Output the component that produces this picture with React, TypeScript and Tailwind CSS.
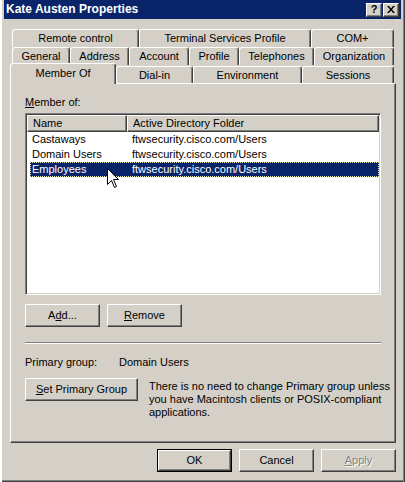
import React from 'react';

const face = { fontFamily: '"Liberation Sans", Arial, sans-serif' };

function Tab({ label, w, h = 'h-[18px]' }: { label: string; w: string; h?: string }) {
  return (
    <div
      className={`${w} ${h} shrink-0 flex items-center justify-center bg-[#d4d0c8] border-l border-t border-r border-white border-r-[#404040] rounded-tl-[3px] rounded-tr-[3px] shadow-[inset_-1px_0_0_#808080]`}
    >
      {label}
    </div>
  );
}

function Btn({ children, w, def, disabled }: { children: React.ReactNode; w: string; def?: boolean; disabled?: boolean }) {
  const inner = (
    <div
      className={`h-full w-full flex items-center justify-center border-t border-l border-white border-r border-b border-r-[#404040] border-b-[#404040] shadow-[inset_-1px_-1px_0_#808080] ${
        disabled ? 'text-[#808080] [text-shadow:1px_1px_0_#fff]' : ''
      }`}
    >
      {children}
    </div>
  );
  if (def) {
    return <div className={`${w} h-[23px] shrink-0 border border-black`}>{inner}</div>;
  }
  return <div className={`${w} h-[23px] shrink-0`}>{inner}</div>;
}

const rows = [
  { name: 'Castaways', folder: 'ftwsecurity.cisco.com/Users' },
  { name: 'Domain Users', folder: 'ftwsecurity.cisco.com/Users' },
  { name: 'Employees', folder: 'ftwsecurity.cisco.com/Users', selected: true },
];

export default function App() {
  return (
    <div
      style={face}
      className="relative w-[405px] h-[482px] bg-[#d4d0c8] text-[11px] leading-[13px] text-black overflow-hidden flex flex-col shadow-[inset_2px_0_0_#fff,inset_-1px_0_0_#404040,inset_-2px_0_0_#808080,inset_0_-1px_0_#404040,inset_0_-2px_0_#808080]"
    >
      {/* Title bar */}
      <div className="mx-[4px] h-[19px] shrink-0 bg-[#0a246a] flex items-center justify-between pl-[2px] pr-[2px]">
        <span className="text-white font-bold text-[12px]">Kate Austen Properties</span>
        <div className="flex gap-[1px]">
          <div className="w-[16px] h-[14px] bg-[#d4d0c8] flex items-center justify-center border-t border-l border-white border-r border-b border-r-[#404040] border-b-[#404040] shadow-[inset_-1px_-1px_0_#808080] font-bold text-[11px] leading-none">
            ?
          </div>
          <div className="w-[16px] h-[14px] bg-[#d4d0c8] flex items-center justify-center border-t border-l border-white border-r border-b border-r-[#404040] border-b-[#404040] shadow-[inset_-1px_-1px_0_#808080]">
            <svg width="8" height="7" viewBox="0 0 8 7">
              <path d="M0 0h2l2 2.5L6 0h2L5 3.5 8 7H6L4 4.5 2 7H0l3-3.5z" fill="#000" />
            </svg>
          </div>
        </div>
      </div>

      {/* Tabs */}
      <div className="mt-[10px] flex flex-col">
        <div className="ml-[12px] flex">
          <Tab label="Remote control" w="w-[127px]" />
          <Tab label="Terminal Services Profile" w="w-[172px]" />
          <Tab label="COM+" w="w-[83px]" />
        </div>
        <div className="ml-[12px] flex">
          <Tab label="General" w="w-[58px]" />
          <Tab label="Address" w="w-[59px]" />
          <Tab label="Account" w="w-[60px]" />
          <Tab label="Profile" w="w-[50px]" />
          <Tab label="Telephones" w="w-[75px]" />
          <Tab label="Organization" w="w-[80px]" />
        </div>
        <div className="ml-[10px] h-[18px] flex items-end">
          <div className="relative z-10 self-start -mt-[2px] w-[106px] h-[21px] shrink-0 flex items-start justify-center pt-[3px] bg-[#d4d0c8] border-l border-t border-r border-white border-r-[#404040] rounded-tl-[3px] rounded-tr-[3px] shadow-[inset_-1px_0_0_#808080]">
            Member Of
          </div>
          <Tab label="Dial-in" w="w-[77px]" h="h-[17px] pt-[1px]" />
          <Tab label="Environment" w="w-[109px]" h="h-[17px] pt-[1px]" />
          <Tab label="Sessions" w="w-[92px]" h="h-[17px] pt-[1px]" />
        </div>
      </div>

      {/* Panel */}
      <div className="ml-[10px] w-[386px] h-[360px] shrink-0 flex flex-col px-[14px] border-t border-l border-white border-r border-b border-r-[#404040] border-b-[#404040] shadow-[inset_-1px_-1px_0_#808080]">
        <div className="mt-[12px]">
          <span className="underline">M</span>ember of:
        </div>

        {/* List */}
        <div className="mt-[4px] w-[356px] h-[182px] bg-white border-t border-l border-[#808080] border-r border-b border-r-white border-b-white shadow-[inset_1px_1px_0_#404040,inset_-1px_-1px_0_#d4d0c8] p-[1px] flex flex-col">
          <div className="flex h-[17px] shrink-0 bg-[#d4d0c8]">
            <div className="w-[100px] h-full flex items-center pl-[5px] border-t border-l border-white border-r border-b border-r-[#404040] border-b-[#404040] shadow-[inset_-1px_-1px_0_#808080]">
              Name
            </div>
            <div className="flex-1 h-full flex items-center pl-[5px] border-t border-l border-white border-r border-b border-r-[#404040] border-b-[#404040] shadow-[inset_-1px_-1px_0_#808080]">
              Active Directory Folder
            </div>
          </div>
          {rows.map((r) => (
            <div key={r.name} className="h-[15px] pl-[3px] flex">
              <div
                className={`flex-1 flex items-center ${
                  r.selected ? 'bg-[#0a246a] text-white outline outline-1 outline-dotted outline-[#e8e8b0] -outline-offset-1' : ''
                }`}
              >
                <div className="w-[96px] pl-[2px]">{r.name}</div>
                <div className="pl-[6px]">{r.folder}</div>
              </div>
            </div>
          ))}
        </div>

        <div className="mt-[9px] flex gap-[7px]">
          <Btn w="w-[75px]">
            <span>
              A<span className="underline">d</span>d...
            </span>
          </Btn>
          <Btn w="w-[75px]">
            <span>
              <span className="underline">R</span>emove
            </span>
          </Btn>
        </div>

        <div className="mt-[15px] w-[356px] border-t border-[#808080] border-b border-b-white" />

        <div className="mt-[12px] flex">
          <div className="w-[94px]">Primary group:</div>
          <div>Domain Users</div>
        </div>

        <div className="mt-[9px] flex">
          <Btn w="w-[113px]">
            <span>
              <span className="underline">S</span>et Primary Group
            </span>
          </Btn>
          <div className="ml-[11px] mt-[2px] whitespace-nowrap">
            There is no need to change Primary group unless
            <br />
            you have Macintosh clients or POSIX-compliant
            <br />
            applications.
          </div>
        </div>
      </div>

      {/* Dialog buttons */}
      <div className="mt-[6px] mr-[9px] flex justify-end gap-[7px]">
        <Btn w="w-[75px]" def>
          OK
        </Btn>
        <Btn w="w-[75px]">Cancel</Btn>
        <Btn w="w-[75px]" disabled>
          <span>
            <span className="underline">A</span>pply
          </span>
        </Btn>
      </div>

      {/* Mouse pointer */}
      <svg className="absolute left-[107px] top-[168px]" width="13" height="20" viewBox="0 0 13 20">
        <path d="M0.5 0.5V16.5L4.5 12.5L7.5 19.5L9.5 18.5L6.5 11.5H11.5Z" fill="#fff" stroke="#000" strokeWidth="1" />
      </svg>
    </div>
  );
}
